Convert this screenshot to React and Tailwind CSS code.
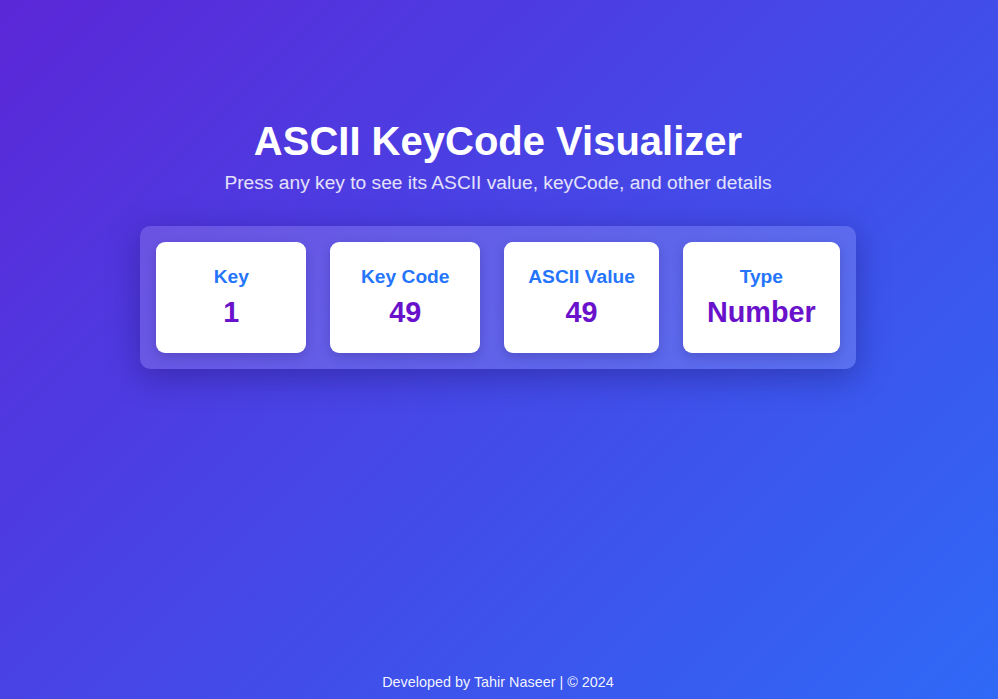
export default function App() {
  const items = [
    { label: "Key", value: "1" },
    { label: "Key Code", value: "49" },
    { label: "ASCII Value", value: "49" },
    { label: "Type", value: "Number" },
  ];
  return (
    <div
      className="min-h-screen flex flex-col items-center text-white bg-[linear-gradient(135deg,#5b27d7,#2f69f6)]"
      style={{ fontFamily: '"Liberation Sans", Arial, sans-serif' }}
    >
      <main className="flex flex-col items-center pt-[118px] pr-[2px]">
        <h1 className="text-[40px] leading-[1.15] font-bold m-0">ASCII KeyCode Visualizer</h1>
        <p className="mt-2 text-[19.2px] leading-[1.15] text-white/85">
          Press any key to see its ASCII value, keyCode, and other details
        </p>
        <div className="mt-8 flex gap-6 p-4 rounded-[10px] bg-white/15 shadow-[0_8px_32px_rgba(20,10,80,0.35)]">
          {items.map((it) => (
            <div
              key={it.label}
              className="min-w-[150px] px-6 py-6 bg-white rounded-[9px] flex flex-col items-center gap-2 shadow-[0_4px_12px_rgba(20,10,80,0.2)]"
            >
              <div className="text-[19.2px] leading-[1.15] font-bold text-[#2575fc] whitespace-nowrap">{it.label}</div>
              <div className="text-[28.8px] leading-[1.15] font-bold text-[#6a11cb] whitespace-nowrap">{it.value}</div>
            </div>
          ))}
        </div>
      </main>
      <footer className="mt-auto pb-[8px] pr-[2px] text-[14.4px] leading-[1.15] text-white/95">
        Developed by Tahir Naseer | © 2024
      </footer>
    </div>
  );
}
